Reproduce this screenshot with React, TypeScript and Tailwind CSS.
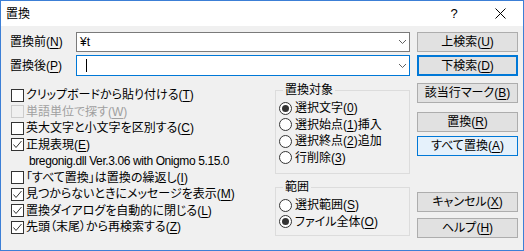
import React from "react";

const font = "font-['Liberation_Sans','Noto_Sans_CJK_JP',sans-serif] [font-feature-settings:'palt']";

function Key({ k }: { k: string }) {
  return <span className="underline underline-offset-[2px]">{k}</span>;
}

function Label({ text, k, tail = "" }: { text: string; k: string; tail?: string }) {
  return (
    <span className="whitespace-nowrap">
      {text}(<Key k={k} />){tail}
    </span>
  );
}

function CheckBox({ checked, disabled }: { checked?: boolean; disabled?: boolean }) {
  return (
    <span
      className={`w-[13px] h-[13px] shrink-0 border flex items-center justify-center ${
        disabled ? "border-[#cccccc] bg-[#f0f0f0]" : "border-[#333333] bg-white"
      }`}
    >
      {checked && (
        <svg width="11" height="11" viewBox="0 0 11 11">
          <polyline points="1.5,5.5 4,8.5 9.5,2" fill="none" stroke="#333333" strokeWidth="1" />
        </svg>
      )}
    </span>
  );
}

function Radio({ checked }: { checked?: boolean }) {
  return (
    <span className="w-[13px] h-[13px] shrink-0 rounded-full border border-[#333333] bg-white flex items-center justify-center">
      {checked && <span className="w-[7px] h-[7px] rounded-full bg-[#333333]" />}
    </span>
  );
}

function CheckRow({
  checked,
  disabled,
  children,
}: {
  checked?: boolean;
  disabled?: boolean;
  children: React.ReactNode;
}) {
  return (
    <div className={`h-[16.5px] flex items-center gap-[2px] pl-[1px] ${disabled ? "text-[#a0a0a0]" : ""}`}>
      <CheckBox checked={checked} disabled={disabled} />
      {children}
    </div>
  );
}

function RadioRow({ checked, children }: { checked?: boolean; children: React.ReactNode }) {
  return (
    <div className="h-[16.5px] flex items-center gap-[3px]">
      <Radio checked={checked} />
      {children}
    </div>
  );
}

function Chevron() {
  return (
    <svg width="9" height="6" viewBox="0 0 9 6" className="mr-[2px]">
      <polyline points="1,1 4.5,4.5 8,1" fill="none" stroke="#606060" strokeWidth="1" />
    </svg>
  );
}

function Button({
  children,
  variant = "normal",
  className = "",
}: {
  children: React.ReactNode;
  variant?: "normal" | "default" | "hover";
  className?: string;
}) {
  const styles = {
    normal: "border border-[#adadad] bg-[#e1e1e1]",
    default: "border-2 border-[#0078d7] bg-[#e1e1e1]",
    hover: "border border-[#0078d7] bg-[#e5f1fb]",
  };
  return (
    <div className={`h-[20px] w-[101px] flex items-center justify-center ${styles[variant]} ${className}`}>
      {children}
    </div>
  );
}

export default function App() {
  return (
    <div
      className={`w-[524px] h-[251px] border border-[#3c7fd6] bg-[#f0f0f0] flex flex-col text-[12px] leading-[16px] text-black ${font}`}
    >
      {/* Title bar */}
      <div className="h-[25px] bg-white flex items-center shrink-0">
        <span className="pl-[5px]">置換</span>
        <span className="ml-auto w-[46px] text-center text-[13px]">?</span>
        <span className="w-[46px] flex justify-center">
          <svg width="11" height="11" viewBox="0 0 11 11">
            <path d="M0.5 0.5 L10.5 10.5 M10.5 0.5 L0.5 10.5" stroke="#000" strokeWidth="1" />
          </svg>
        </span>
      </div>

      <div className="flex pl-[9px] pt-[6px]">
        <div className="w-[400px] flex flex-col">
          <div className="flex items-center h-[20px]">
            <span className="w-[66px]">
              <Label text="置換前" k="N" />
            </span>
            <div className="w-[334px] h-[20px] border border-[#7a7a7a] bg-white flex items-center pl-[3px]">
              <span>¥t</span>
              <span className="ml-auto">
                <Chevron />
              </span>
            </div>
          </div>
          <div className="flex items-center h-[21px] mt-[3px]">
            <span className="w-[66px]">
              <Label text="置換後" k="P" />
            </span>
            <div className="w-[334px] h-[21px] border border-[#0078d7] bg-white flex items-center pl-[9px]">
              <span className="w-[1px] h-[13px] bg-black" />
              <span className="ml-auto">
                <Chevron />
              </span>
            </div>
          </div>

          <div className="flex mt-[6px]">
            <div className="flex flex-col pt-[5px] leading-[16.5px]">
              <CheckRow>
                <Label text="クリップボードから貼り付ける" k="T" />
              </CheckRow>
              <CheckRow disabled>
                <Label text="単語単位で探す" k="W" />
              </CheckRow>
              <CheckRow>
                <Label text="英大文字と小文字を区別する" k="C" />
              </CheckRow>
              <CheckRow checked>
                <Label text="正規表現" k="E" />
              </CheckRow>
              <div className="h-[16.5px] flex items-center pl-[19px] whitespace-nowrap tracking-[-0.4px]">
                bregonig.dll Ver.3.06 with Onigmo 5.15.0
              </div>
              <CheckRow>
                <span className="whitespace-nowrap">
                  「すべて置換」は置換の繰返し(<Key k="I" />)
                </span>
              </CheckRow>
              <CheckRow checked>
                <Label text="見つからないときにメッセージを表示" k="M" />
              </CheckRow>
              <CheckRow checked>
                <Label text="置換ダイアログを自動的に閉じる" k="L" />
              </CheckRow>
              <CheckRow checked>
                <Label text="先頭（末尾）から再検索する" k="Z" />
              </CheckRow>
            </div>

            <div className="ml-auto w-[135px] flex flex-col">
              <fieldset className="h-[92px] border border-[#dcdcdc] pl-[3px] pt-[2px]">
                <legend className="ml-[4px] px-[2px] leading-[16px]">置換対象</legend>
                <RadioRow checked>
                  <Label text="選択文字" k="0" />
                </RadioRow>
                <RadioRow>
                  <Label text="選択始点" k="1" tail="挿入" />
                </RadioRow>
                <RadioRow>
                  <Label text="選択終点" k="2" tail="追加" />
                </RadioRow>
                <RadioRow>
                  <Label text="行削除" k="3" />
                </RadioRow>
              </fieldset>
              <fieldset className="h-[57px] mt-[5px] border border-[#dcdcdc] pl-[3px] pt-[2px]">
                <legend className="ml-[4px] px-[2px] leading-[16px]">範囲</legend>
                <RadioRow>
                  <Label text="選択範囲" k="S" />
                </RadioRow>
                <RadioRow checked>
                  <Label text="ファイル全体" k="O" />
                </RadioRow>
              </fieldset>
            </div>
          </div>
        </div>

        <div className="ml-[7px] flex flex-col">
          <Button>
            <Label text="上検索" k="U" />
          </Button>
          <Button variant="default" className="mt-[3px] h-[21px]">
            <Label text="下検索" k="D" />
          </Button>
          <Button className="mt-[7px]">
            <Label text="該当行マーク" k="B" />
          </Button>
          <Button className="mt-[9px]">
            <Label text="置換" k="R" />
          </Button>
          <Button variant="hover" className="mt-[4px]">
            <Label text="すべて置換" k="A" />
          </Button>
          <Button className="mt-[36px]">
            <Label text="キャンセル" k="X" />
          </Button>
          <Button className="mt-[6px]">
            <Label text="ヘルプ" k="H" />
          </Button>
        </div>
      </div>
    </div>
  );
}
